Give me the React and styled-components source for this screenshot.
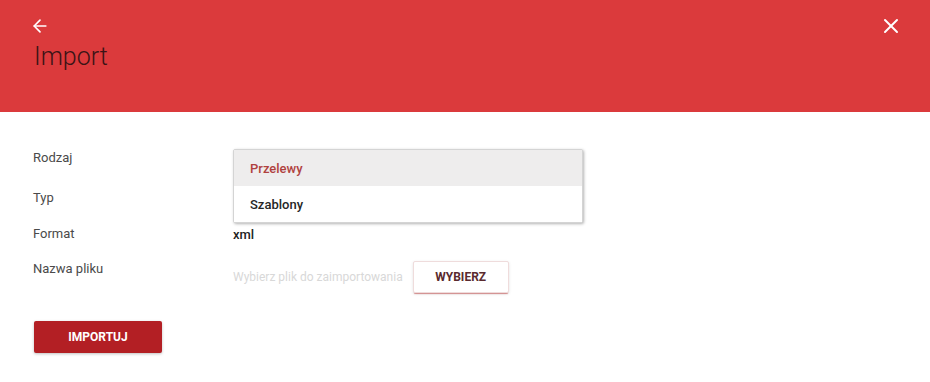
import React from "react";
import styled, { createGlobalStyle } from "styled-components";
import { ArrowLeft, X } from "lucide-react";

const GlobalStyle = createGlobalStyle`
    body {
        margin: 0;
        background: #ffffff;
        font-family: Roboto, "Liberation Sans", Arial, sans-serif;
    }
`

const options = [
    { label: "Przelewy", active: true },
    { label: "Szablony", active: false },
]

class App extends React.Component{
    render(){
        return (
            <Page>
                <GlobalStyle />
                <Header>
                    <TopBar>
                        <IconButton $shift={-4}>
                            <ArrowLeft size={20} strokeWidth={2} color="#ffffff" />
                        </IconButton>
                        <IconButton>
                            <X size={24} strokeWidth={2} color="#ffffff" />
                        </IconButton>
                    </TopBar>
                    <Title>Import</Title>
                </Header>
                <Body>
                    <Row $height={40}>
                        <Label>Rodzaj</Label>
                        <Value>
                            <Menu>
                                {options.map(o => (
                                    <Option key={o.label} $active={o.active}>{o.label}</Option>
                                ))}
                            </Menu>
                        </Value>
                    </Row>
                    <Row $height={40}>
                        <Label>Typ</Label>
                        <Value />
                    </Row>
                    <Row $height={32}>
                        <Label>Format</Label>
                        <Value><Strong>xml</Strong></Value>
                    </Row>
                    <Row $height={32} $top>
                        <Label>Nazwa pliku</Label>
                        <Value>
                            <Placeholder>Wybierz plik do zaimportowania</Placeholder>
                            <PickButton>WYBIERZ</PickButton>
                        </Value>
                    </Row>
                    <ImportButton>IMPORTUJ</ImportButton>
                </Body>
            </Page>
        )
    }
}

const Page = styled.div`
    width: 930px;
    height: 382px;
    overflow: hidden;
    background: #ffffff;
`

const Header = styled.div`
    height: 112px;
    box-sizing: border-box;
    background: #db3a3c;
    padding: 14px 27px 0 34px;
`

const TopBar = styled.div`
    height: 24px;
    display: flex;
    align-items: center;
    justify-content: space-between;
`

const IconButton = styled.div`
    display: flex;
    margin-left: ${p => p.$shift || 0}px;
    cursor: pointer;
`

const Title = styled.h1`
    margin: 4px 0 0 0;
    font-size: 25px;
    line-height: 30px;
    font-weight: 300;
    color: #3a1416;
`

const Body = styled.div`
    padding: 26px 0 0 33px;
    display: flex;
    flex-direction: column;
`

const Row = styled.div`
    display: flex;
    align-items: ${p => p.$top ? "flex-start" : "center"};
    height: ${p => p.$height}px;
    margin-top: ${p => p.$top ? 11 : 0}px;
`

const Label = styled.div`
    width: 200px;
    flex-shrink: 0;
    font-size: 13px;
    line-height: 16px;
    color: #4a4a4a;
`

const Value = styled.div`
    position: relative;
    display: flex;
    align-items: center;
    gap: 10px;
    height: 100%;
`

const Menu = styled.div`
    position: absolute;
    top: 11px;
    left: 0;
    width: 348px;
    background: #ffffff;
    border: 1px solid #d4d4d4;
    border-radius: 2px;
    box-shadow: 1px 1px 3px rgba(0, 0, 0, 0.3);
    z-index: 2;
`

const Option = styled.div`
    height: 36px;
    display: flex;
    align-items: center;
    padding-left: 16px;
    font-size: 13px;
    font-weight: 500;
    color: ${p => p.$active ? "#b0423f" : "#262626"};
    background: ${p => p.$active ? "#eeeded" : "#ffffff"};
`

const Strong = styled.span`
    font-size: 13px;
    font-weight: 500;
    color: #222222;
`

const Placeholder = styled.span`
    font-size: 12px;
    color: #d8d8d8;
`

const PickButton = styled.button`
    width: 96px;
    height: 32px;
    background: #ffffff;
    border: 1px solid #efdcdc;
    border-radius: 2px;
    box-shadow: 0 2px 1px -1px rgba(190, 60, 60, 0.55), 0 1px 3px rgba(0, 0, 0, 0.12);
    font-family: inherit;
    font-size: 12px;
    font-weight: 700;
    color: #5a2a2e;
    cursor: pointer;
`

const ImportButton = styled.button`
    margin-top: 28px;
    margin-left: 1px;
    width: 128px;
    height: 32px;
    background: #b31f24;
    border: none;
    border-radius: 2px;
    box-shadow: 0 1px 3px rgba(0, 0, 0, 0.25);
    font-family: inherit;
    font-size: 12px;
    font-weight: 700;
    color: #ffffff;
    cursor: pointer;
`

export default App
